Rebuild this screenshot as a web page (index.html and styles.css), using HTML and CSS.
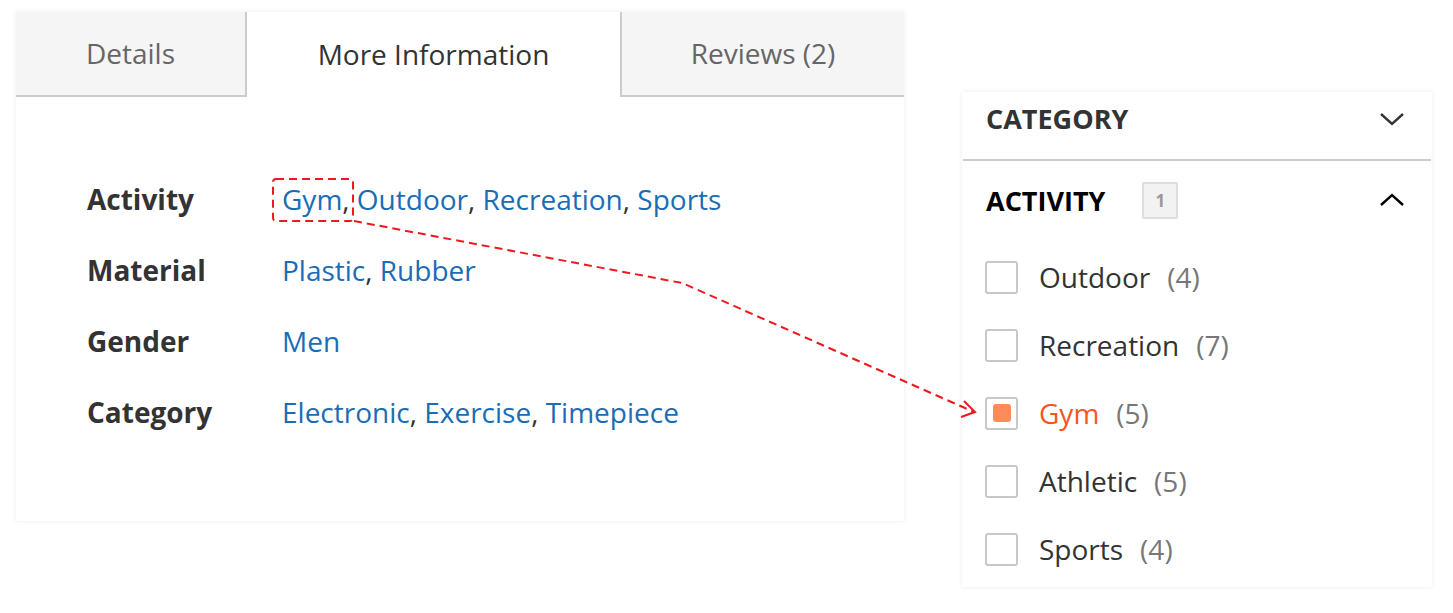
FILE: index.html
```html
<!DOCTYPE html>
<html>
<head>
<meta charset="utf-8">
<link rel="stylesheet" href="styles.css">
</head>
<body>
<div class="page">
  <div class="card product">
    <div class="tabs">
      <div class="tab">Details</div>
      <div class="tab active">More Information</div>
      <div class="tab">Reviews (2)</div>
    </div>
    <div class="attrs">
      <div class="label">Activity</div>
      <div class="value"><a>Gym</a>, <a>Outdoor</a>, <a>Recreation</a>, <a>Sports</a></div>
      <div class="label">Material</div>
      <div class="value"><a>Plastic</a>, <a>Rubber</a></div>
      <div class="label">Gender</div>
      <div class="value"><a>Men</a></div>
      <div class="label">Category</div>
      <div class="value"><a>Electronic</a>, <a>Exercise</a>, <a>Timepiece</a></div>
    </div>
  </div>
  <div class="card filters">
    <div class="fhead cathead">
      <span class="ftitle cat">CATEGORY</span>
      <svg class="chev" width="26" height="16" viewBox="0 0 26 16"><path d="M2 3 L13 13 L24 3" fill="none" stroke="#333" stroke-width="2.4"/></svg>
    </div>
    <div class="fhead open">
      <span class="ftitle">ACTIVITY</span>
      <span class="badge">1</span>
      <svg class="chev" width="26" height="16" viewBox="0 0 26 16"><path d="M2 13 L13 3 L24 13" fill="none" stroke="#000" stroke-width="2.4"/></svg>
    </div>
    <ul class="opts">
      <li><span class="box"></span><span class="name">Outdoor</span><span class="count">(4)</span></li>
      <li><span class="box"></span><span class="name">Recreation</span><span class="count">(7)</span></li>
      <li class="checked"><span class="box"><span class="mark"></span></span><span class="name">Gym</span><span class="count">(5)</span></li>
      <li><span class="box"></span><span class="name">Athletic</span><span class="count">(5)</span></li>
      <li><span class="box"></span><span class="name">Sports</span><span class="count">(4)</span></li>
    </ul>
  </div>
</div>
<svg class="overlay" width="1453" height="613" viewBox="0 0 1453 613">
  <rect x="273" y="179" width="80" height="42" rx="3" fill="none" stroke="#f0181e" stroke-width="2" stroke-dasharray="8 5"/>
  <path d="M354 221 L682 283 L974 412" fill="none" stroke="#f0181e" stroke-width="2" stroke-dasharray="8 5"/>
  <path d="M964 401 L975 412 L961 417" fill="none" stroke="#f0181e" stroke-width="2"/>
</svg>
</body>
</html>
```
FILE: styles.css
```css
html, body {
  margin: 0;
  padding: 0;
  background: #fff;
}
body {
  font-family: "Open Sans", "Noto Sans", sans-serif;
  color: #333;
  width: 1453px;
  height: 613px;
  position: relative;
  overflow: hidden;
}
.page {
  display: flex;
  align-items: flex-start;
  padding: 12px 0 0 16px;
}
.card {
  background: #fff;
  box-shadow: 0 0 5px rgba(0,0,0,0.08);
}
.product {
  width: 888px;
  height: 509px;
}
.tabs {
  display: flex;
  height: 85px;
}
.tab {
  box-sizing: border-box;
  height: 85px;
  display: flex;
  align-items: center;
  justify-content: center;
  background: #f5f5f5;
  color: #666;
  font-size: 28px;
  padding-bottom: 2px;
  border-bottom: 2px solid #ccc;
}
.tab:first-child {
  width: 231px;
  border-right: 2px solid #ccc;
}
.tab.active {
  width: 373px;
  background: #fff;
  color: #333;
  border-bottom: none;
}
.tab:last-child {
  flex: 1;
  border-left: 2px solid #ccc;
}
.attrs {
  display: grid;
  grid-template-columns: 195px auto;
  grid-auto-rows: 71px;
  align-items: center;
  padding: 66px 0 0 71px;
  font-size: 28px;
}
.label {
  font-weight: 700;
  color: #333;
}
.value {
  color: #333;
}
.value a {
  color: #1a6db5;
}
.filters {
  margin-left: 58px;
  margin-top: 80px;
  width: 470px;
  height: 495px;
}
.fhead {
  box-sizing: border-box;
  display: flex;
  align-items: center;
  padding: 0 26px 0 23px;
  margin: 0 1px;
}
.cathead {
  height: 69px;
  padding-bottom: 14px;
  border-bottom: 2px solid #ccc;
}
.fhead.open {
  height: 82px;
  padding-bottom: 4px;
}
.ftitle {
  font-size: 27px;
  font-weight: 700;
  color: #000;
}
.ftitle.cat {
  color: #333;
}
.badge {
  box-sizing: border-box;
  width: 36px;
  height: 37px;
  margin-left: 37px;
  background: #f2f2f2;
  border: 2px solid #ddd;
  border-radius: 2px;
  display: flex;
  align-items: center;
  justify-content: center;
  font-size: 17px;
  font-weight: 700;
  color: #999;
}
.chev {
  margin-left: auto;
}
.opts {
  list-style: none;
  margin: 0;
  padding: 0 0 0 23px;
}
.opts li {
  display: flex;
  align-items: center;
  height: 68px;
  font-size: 28px;
}
.box {
  box-sizing: border-box;
  width: 33px;
  height: 33px;
  border: 2px solid #c8c8c8;
  border-radius: 3px;
  display: flex;
  align-items: center;
  justify-content: center;
  margin-right: 21px;
}
.mark {
  width: 18px;
  height: 18px;
  border-radius: 3px;
  background: #fe8b5a;
}
.name {
  color: #333;
}
.checked .name {
  color: #f6561c;
}
.count {
  color: #777;
  margin-left: 17px;
}
.overlay {
  position: absolute;
  left: 0;
  top: 0;
  pointer-events: none;
}
```
